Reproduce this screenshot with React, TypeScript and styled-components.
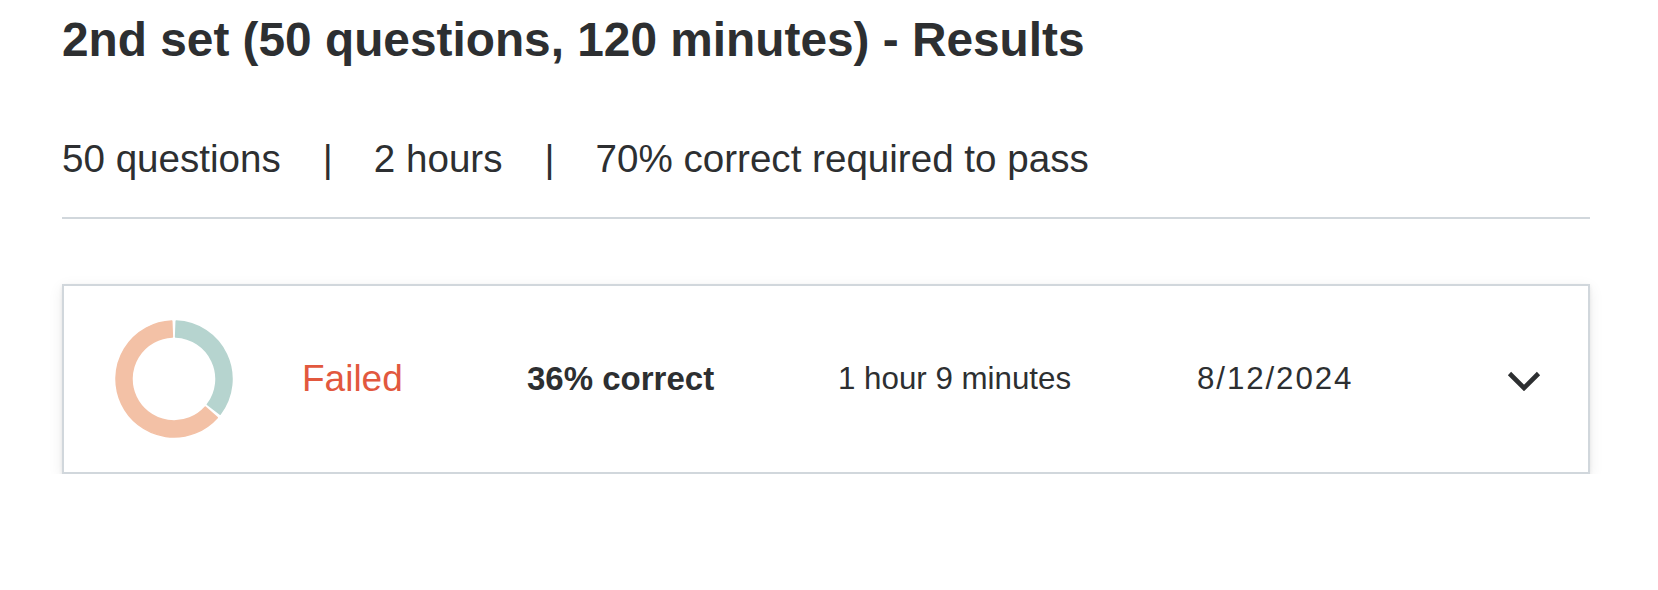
import React from 'react';
import styled, { createGlobalStyle } from 'styled-components';

const GlobalStyle = createGlobalStyle`
    html, body {
        margin: 0;
        padding: 0;
        background: #ffffff;
    }
    body {
        font-family: "Liberation Sans", Arial, sans-serif;
        color: #2d2f31;
    }
`;

const Page = styled.div`
    width: 1528px;
    margin-left: 62px;
    padding-top: 11px;
`;

const Title = styled.h1`
    margin: 0;
    font-size: 47.8px;
    line-height: 57px;
    font-weight: 700;
    color: #2d2f31;
`;

const Facts = styled.div`
    margin-top: 68px;
    display: flex;
    align-items: center;
    font-size: 38.6px;
    line-height: 45.6px;
    color: #2d2f31;
`;

const Separator = styled.span`
    margin: 0 41px 0 42px;
`;

const Divider = styled.hr`
    margin: 35px 0 0;
    border: none;
    height: 2px;
    background: #d1d7dc;
`;

const Card = styled.div`
    margin-top: 65px;
    border: 2px solid #d1d7dc;
    background: #fff;
    box-shadow: 0 2px 4px rgba(0, 0, 0, 0.08), 0 4px 14px rgba(0, 0, 0, 0.08);
    padding: 34px 47px 34px 51px;
    display: grid;
    grid-template-columns: 187px 225px 311px 359px 1fr 34px;
    align-items: center;
`;

const Status = styled.span<{ $failed?: boolean }>`
    font-size: 37px;
    color: ${({ $failed }) => ($failed ? '#e2583e' : '#1e6055')};
`;

const Cell = styled.span<{ $bold?: boolean }>`
    font-size: ${({ $bold }) => ($bold ? '33px' : '31.3px')};
    font-weight: ${({ $bold }) => ($bold ? 700 : 400)};
    color: #2d2f31;
`;

const DateCell = styled(Cell)`
    letter-spacing: 1.9px;
`;

const Toggle = styled.button`
    border: none;
    background: none;
    padding: 0;
    width: 34px;
    height: 20px;
    display: flex;
    cursor: pointer;
    margin-top: 4px;
`;

// angle in degrees, clockwise from 12 o'clock
const polar = (cx: number, cy: number, r: number, deg: number) => {
    const a = ((deg - 90) * Math.PI) / 180;
    return [cx + r * Math.cos(a), cy + r * Math.sin(a)];
};

const sector = (from: number, to: number) => {
    const c = 59, ro = 58, ri = 42;
    const large = to - from > 180 ? 1 : 0;
    const [x1, y1] = polar(c, c, ro, from);
    const [x2, y2] = polar(c, c, ro, to);
    const [x3, y3] = polar(c, c, ri, to);
    const [x4, y4] = polar(c, c, ri, from);
    return `M${x1} ${y1} A${ro} ${ro} 0 ${large} 1 ${x2} ${y2} L${x3} ${y3} A${ri} ${ri} 0 ${large} 0 ${x4} ${y4} Z`;
};

const ScoreRing = ({ percent }: { percent: number }) => {
    const split = (percent / 100) * 360;
    const gap = 2.2;
    return (
        <svg width="118" height="118" viewBox="0 0 118 118">
            <path d={sector(gap, split - gap)} fill="#b6d4cf" stroke="#b6d4cf" strokeWidth="1.5" strokeLinejoin="round" />
            <path d={sector(split + gap, 360 - gap)} fill="#f3c1a6" stroke="#f3c1a6" strokeWidth="1.5" strokeLinejoin="round" />
        </svg>
    );
};

const Chevron = () => (
    <svg width="34" height="20" viewBox="0 0 34 20">
        <polyline points="2.5,2.5 17,17 31.5,2.5" fill="none" stroke="#2d2f31" strokeWidth="4.6" />
    </svg>
);

const App = () => {
    const attempt = {
        percent: 36,
        passed: false,
        duration: '1 hour 9 minutes',
        date: '8/12/2024',
    };

    return (
        <>
            <GlobalStyle />
            <Page>
                <Title>2nd set (50 questions, 120 minutes) - Results</Title>
                <Facts>
                    <span>50 questions</span>
                    <Separator>|</Separator>
                    <span>2 hours</span>
                    <Separator>|</Separator>
                    <span>70% correct required to pass</span>
                </Facts>
                <Divider />
                <Card>
                    <ScoreRing percent={attempt.percent} />
                    <Status $failed={!attempt.passed}>{attempt.passed ? 'Passed' : 'Failed'}</Status>
                    <Cell $bold>{attempt.percent}% correct</Cell>
                    <Cell>{attempt.duration}</Cell>
                    <DateCell>{attempt.date}</DateCell>
                    <Toggle aria-label="Expand">
                        <Chevron />
                    </Toggle>
                </Card>
            </Page>
        </>
    );
};

export default App;
